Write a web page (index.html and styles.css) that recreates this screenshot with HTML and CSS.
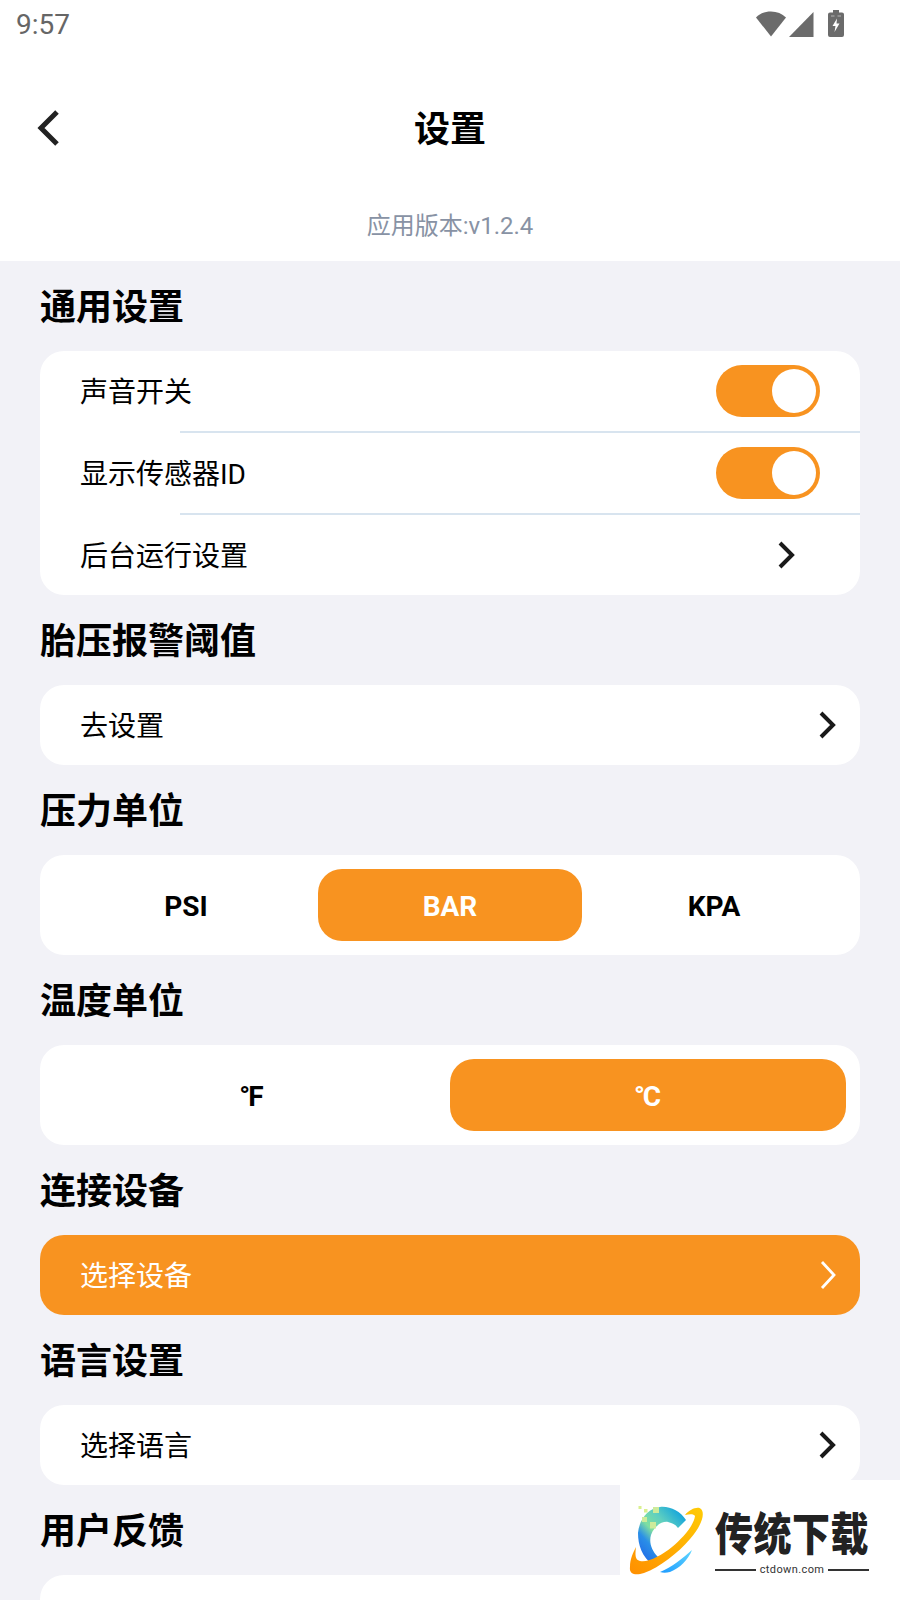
FILE: index.html
```html
<!DOCTYPE html>
<html lang="zh">
<head>
<meta charset="utf-8">
<title>设置</title>
<link rel="stylesheet" href="styles.css">
</head>
<body>
<div class="page">
  <header class="top">
    <div class="status">
      <span class="time">9:57</span>
      <div class="status-icons">
        <svg class="ic-wifi" width="30" height="26" viewBox="0 0 30 26"><path d="M0 6.500C4 2.500 9 .5 15 .5s11 2 15 6L15 25.500z" fill="#6b6b6b"/></svg>
        <svg class="ic-signal" width="25" height="25" viewBox="0 0 25 25"><path d="M24.500 0v25H0z" fill="#6b6b6b"/></svg>
        <svg class="ic-batt" width="16" height="27" viewBox="0 0 16 27"><path d="M5 0h6v2.500h3a2 2 0 0 1 2 2V25a2 2 0 0 1-2 2H2a2 2 0 0 1-2-2V4.500a2 2 0 0 1 2-2h3z" fill="#6b6b6b"/><path d="M9 8.500 4.500 16H7.500L6.500 22 11.500 13.500H8.500z" fill="#fff"/><path d="M3 5.500h3.500v1H3zM9.500 5.500H13v1H9.500z" fill="#b5b5b5"/></svg>
      </div>
    </div>
    <nav class="nav">
      <svg class="back" width="24" height="36" viewBox="0 0 24 36"><path d="M20 2 4 18l16 16" fill="none" stroke="#222" stroke-width="5" stroke-linejoin="miter"/></svg>
      <h1 class="title">设置</h1>
    </nav>
    <div class="version">应用版本:v1.2.4</div>
  </header>

  <main class="content">
    <h2 class="sec">通用设置</h2>
    <section class="card">
      <div class="row"><span class="lbl">声音开关</span><span class="toggle"><i class="knob"></i></span></div>
      <div class="line"></div>
      <div class="row"><span class="lbl">显示传感器ID</span><span class="toggle"><i class="knob"></i></span></div>
      <div class="line"></div>
      <div class="row row-link row-inset"><span class="lbl">后台运行设置</span><svg width="18" height="28" viewBox="0 0 18 28"><path d="M2 2 14 14 2 26" fill="none" stroke="#1a1a1a" stroke-width="4"/></svg></div>
    </section>

    <h2 class="sec">胎压报警阈值</h2>
    <section class="card">
      <div class="row row-link"><span class="lbl">去设置</span><svg width="18" height="28" viewBox="0 0 18 28"><path d="M2 2 14 14 2 26" fill="none" stroke="#1a1a1a" stroke-width="4"/></svg></div>
    </section>

    <h2 class="sec">压力单位</h2>
    <section class="card seg">
      <div class="opt">PSI</div>
      <div class="opt on">BAR</div>
      <div class="opt">KPA</div>
    </section>

    <h2 class="sec">温度单位</h2>
    <section class="card seg">
      <div class="opt deg">°F</div>
      <div class="opt deg on">°C</div>
    </section>

    <h2 class="sec">连接设备</h2>
    <section class="card card-on">
      <div class="row row-link"><span class="lbl">选择设备</span><svg width="18" height="28" viewBox="0 0 18 28"><path d="M3 1 15 14 3 27" fill="none" stroke="#fff" stroke-width="2.800"/></svg></div>
    </section>

    <h2 class="sec">语言设置</h2>
    <section class="card">
      <div class="row row-link"><span class="lbl">选择语言</span><svg width="18" height="28" viewBox="0 0 18 28"><path d="M2 2 14 14 2 26" fill="none" stroke="#1a1a1a" stroke-width="4"/></svg></div>
    </section>

    <h2 class="sec">用户反馈</h2>
    <section class="card">
      <div class="row"></div>
    </section>
  </main>

  <aside class="mark">
    <svg class="mark-logo" width="95" height="80" viewBox="0 0 95 80">
      <defs>
        <linearGradient id="gc" x1="0.100" y1="1" x2="0.900" y2="0.100"><stop offset="0" stop-color="#1f63e6"/><stop offset=".3" stop-color="#2a8fe8"/><stop offset=".48" stop-color="#7fe0a0"/><stop offset=".7" stop-color="#5fcfc0"/><stop offset="1" stop-color="#14a5dc"/></linearGradient>
        <linearGradient id="gr" x1="0" y1="1" x2="1" y2="0"><stop offset="0" stop-color="#ff8f00"/><stop offset="1" stop-color="#ffcb05"/></linearGradient>
        <linearGradient id="gb" x1="0" y1="1" x2="1" y2="0"><stop offset="0" stop-color="#1e9bff"/><stop offset="1" stop-color="#5fd6ff"/></linearGradient>
      </defs>
      <path d="M66 25C60 16 50 11 40 12 28 13 19 25 18 38 18 50 22 62 33 70L38 62C31 55 29 47 31 40 34 31 42 26 48 27 52 28 55 29 58 33z" fill="url(#gc)"/>
      <path d="M65 20C70 14 78 11 81 14 86 19 80 33 70 44 58 58 40 72 24 78 15 81 9 79 10 72 10 64 13 58 16 52 15 60 15 65 20 66 28 68 42 60 52 52 63 43 74 30 75 21 74 19 70 19 65 20z" fill="url(#gr)"/>
      <path d="M72 55C68 65 60 73 50 77 46 78 43 78 40 77 52 72 62 64 72 55z" fill="url(#gb)"/>
      <path d="M33 12h6v6h-6zM22 22h5v5h-5zM30 27h6v6.500h-6z" fill="#cdeb9b"/>
      <path d="M24 14h3.500v3.500H24zM18.500 11h3v3h-3z" fill="#d9f08f"/>
    </svg>
    <div class="mark-side">
      <div class="mark-name">传统下载</div>
      <div class="mark-url"><i class="rule"></i><span>ctdown.com</span><i class="rule"></i></div>
    </div>
  </aside>
</div>
</body>
</html>
```

FILE: styles.css
```css
* { box-sizing: border-box; margin: 0; padding: 0; }
html, body { background: #fff; }
body { font-family: Roboto, "Noto Sans CJK SC", sans-serif; color: #000; }

.page { position: relative; width: 900px; height: 1600px; overflow: hidden; background: #f2f2f7; }

.top { background: #fff; height: 261px; }

.status { height: 50px; display: flex; justify-content: space-between; padding: 8px 56px 0 16px; }
.time { font-size: 28px; line-height: 34px; color: #666; }
.status-icons { display: flex; align-items: flex-start; padding-top: 2px; }
.ic-wifi { margin-top: 1px; }
.ic-signal { margin: 2px 0 0 3px; }
.ic-batt { margin: 0 0 0 14px; }

.nav { height: 156px; display: flex; align-items: center; justify-content: center; position: relative; padding-top: 4px; }
.back { position: absolute; left: 37px; top: 60px; }
.title { font-size: 36px; font-weight: 700; line-height: 50px; }

.version { height: 40px; line-height: 40px; text-align: center; font-size: 24px; color: #8892a4; }

.content { display: flex; flex-direction: column; padding: 0 40px; }
.sec { height: 90px; line-height: 94px; font-size: 36px; font-weight: 700; }

.card { background: #fff; border-radius: 24px; flex: none; overflow: hidden; }
.card-on { background: #f89320; color: #fff; }

.row { height: 80px; display: flex; align-items: center; justify-content: space-between; padding: 0 40px; font-size: 28px; }
.row-link { padding-right: 23px; }
.row.row-inset { padding-right: 64px; }
.lbl { margin-bottom: 2px; }

.line { height: 2px; margin-left: 140px; background: #d8e4ef; }

.toggle { width: 104px; height: 52px; border-radius: 26px; background: #f89320; display: flex; align-items: center; justify-content: flex-end; padding-right: 4px; }
.knob { width: 44px; height: 44px; border-radius: 50%; background: #fff; }

.seg { display: flex; height: 100px; padding: 14px; }
.opt { flex: 1 1 0; display: flex; align-items: center; justify-content: center; border-radius: 24px; font-size: 28px; font-weight: 700; padding-top: 2px; }
.opt.on { background: #f89320; color: #fff; }
.deg { letter-spacing: -2px; padding-right: 3px; }

.mark { position: absolute; left: 620px; top: 1480px; width: 280px; height: 120px; background: #fff; display: flex; align-items: flex-start; padding-top: 15px; }
.mark-logo { flex: none; }
.mark-side { display: flex; flex-direction: column; width: 154px; margin-top: 13px; }
.mark-name { font-size: 38px; line-height: 46px; font-weight: 900; color: #222; white-space: nowrap; letter-spacing: .5px; transform: scaleY(1.2); transform-origin: top left; }
.mark-url { display: flex; align-items: center; gap: 4px; margin-top: 9px; font-size: 11px; line-height: 14px; color: #333; letter-spacing: .4px; }
.rule { flex: 1; height: 2px; background: #333; }
```
